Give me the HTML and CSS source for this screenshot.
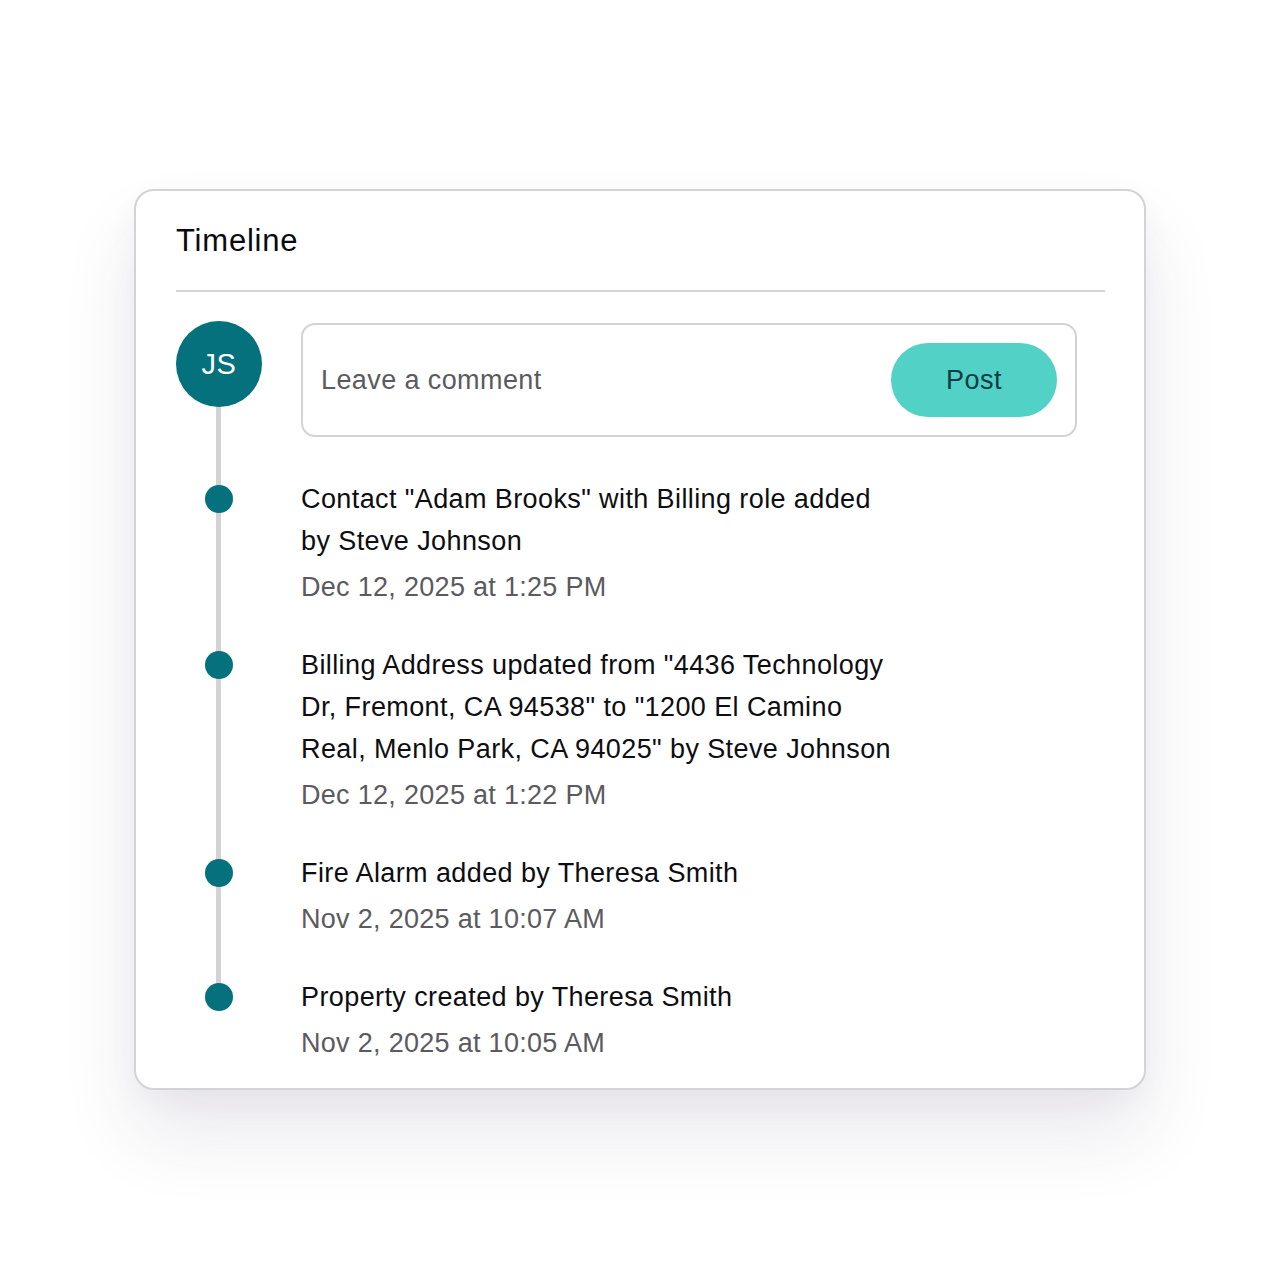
FILE: index.html
```html
<!DOCTYPE html>
<html lang="en">
<head>
<meta charset="utf-8">
<title>Timeline</title>
<link rel="stylesheet" href="styles.css">
</head>
<body>
<main class="page">
  <section class="card">
    <header class="card-header">
      <h1 class="card-title">Timeline</h1>
    </header>
    <div class="timeline">
      <div class="row comment-row">
        <div class="avatar">JS</div>
        <div class="comment-box">
          <span class="placeholder">Leave a comment</span>
          <button class="post-btn" type="button">Post</button>
        </div>
      </div>
      <ol class="events">
        <li class="row event">
          <span class="dot-col"><span class="dot"></span></span>
          <div class="event-body">
            <p class="event-text">Contact "Adam Brooks" with Billing role added by Steve Johnson</p>
            <p class="event-date">Dec 12, 2025 at 1:25 PM</p>
          </div>
        </li>
        <li class="row event">
          <span class="dot-col"><span class="dot"></span></span>
          <div class="event-body">
            <p class="event-text">Billing Address updated from "4436 Technology Dr, Fremont, CA 94538" to "1200 El Camino Real, Menlo Park, CA 94025" by Steve Johnson</p>
            <p class="event-date">Dec 12, 2025 at 1:22 PM</p>
          </div>
        </li>
        <li class="row event">
          <span class="dot-col"><span class="dot"></span></span>
          <div class="event-body">
            <p class="event-text">Fire Alarm added by Theresa Smith</p>
            <p class="event-date">Nov 2, 2025 at 10:07 AM</p>
          </div>
        </li>
        <li class="row event">
          <span class="dot-col"><span class="dot"></span></span>
          <div class="event-body">
            <p class="event-text">Property created by Theresa Smith</p>
            <p class="event-date">Nov 2, 2025 at 10:05 AM</p>
          </div>
        </li>
      </ol>
    </div>
  </section>
</main>
</body>
</html>
```
FILE: styles.css
```css
* { box-sizing: border-box; }
html, body {
  margin: 0;
  padding: 0;
  background: #ffffff;
}
body {
  font-family: "Liberation Sans", Arial, sans-serif;
  color: #0d0d12;
}
.page {
  padding-top: 189px;
  display: flex;
  justify-content: center;
  min-height: 1280px;
}
.card {
  width: 1012px;
  height: 901px;
  border: 2px solid #d3d2d6;
  border-radius: 20px;
  background: #fff;
  padding: 0 39px 0 40px;
  box-shadow: 0 45px 75px rgba(60, 50, 80, 0.11), 0 10px 30px rgba(60, 50, 80, 0.04);
}
.card-header {
  padding-top: 30px;
  padding-bottom: 29px;
  border-bottom: 2px solid #d3d2d6;
}
.card-title {
  margin: 0;
  font-size: 31px;
  line-height: 40px;
  letter-spacing: 0.8px;
  font-weight: 400;
  color: #0a0a0e;
}
.timeline {
  position: relative;
  padding-top: 29px;
}
.timeline::before {
  content: "";
  position: absolute;
  left: 40px;
  width: 5px;
  top: 100px;
  bottom: 67px;
  background: #d3d2d6;
}
.row {
  display: grid;
  grid-template-columns: 86px 1fr;
  column-gap: 39px;
}
.avatar {
  position: relative;
  z-index: 1;
  width: 86px;
  height: 86px;
  border-radius: 50%;
  background: #04717c;
  color: #fff;
  font-size: 29px;
  letter-spacing: 0.5px;
  display: flex;
  align-items: center;
  justify-content: center;
}
.comment-box {
  margin-top: 2px;
  width: 776px;
  height: 114px;
  border: 2px solid #d3d2d6;
  border-radius: 14px;
  display: flex;
  align-items: center;
  justify-content: space-between;
  padding: 0 18px 0 18px;
}
.placeholder {
  font-size: 27px;
  letter-spacing: 0.4px;
  color: #5b5a61;
}
.post-btn {
  width: 166px;
  height: 74px;
  border: none;
  border-radius: 37px;
  background: #52d1c6;
  color: #0c3d45;
  font-family: inherit;
  font-size: 27px;
  letter-spacing: 0.5px;
  padding: 0;
}
.events {
  list-style: none;
  margin: 41px 0 0;
  padding: 0;
  display: flex;
  flex-direction: column;
  gap: 32px;
}
.dot-col {
  position: relative;
  z-index: 1;
  display: flex;
  justify-content: center;
  padding-top: 7px;
}
.dot {
  width: 28px;
  height: 28px;
  border-radius: 50%;
  background: #04717c;
}
.event-body {
  max-width: 600px;
}
.event-text {
  margin: 0;
  font-size: 27px;
  line-height: 42px;
  letter-spacing: 0.4px;
  color: #0d0d12;
}
.event-date {
  margin: 0;
  font-size: 27px;
  line-height: 50px;
  letter-spacing: 0.3px;
  color: #5b5a61;
}
```
